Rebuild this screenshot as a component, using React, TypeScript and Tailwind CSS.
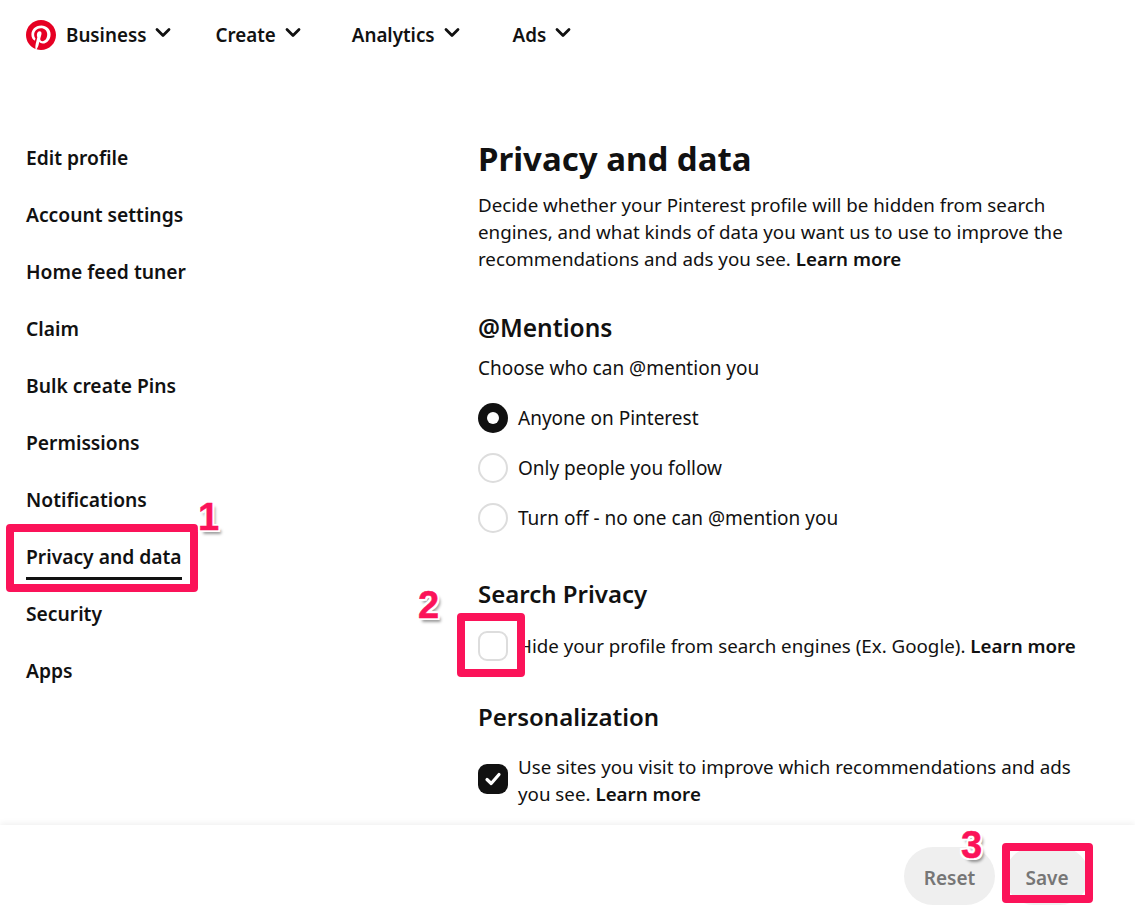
import React from "react";

const font = "font-['Noto_Sans','Open_Sans',sans-serif]";
const ink = "text-[#111111]";

function Chevron() {
  return (
    <svg width="16" height="16" viewBox="0 0 16 16" className="ml-[9px] mb-[5px]" fill="none">
      <path d="M2 4.5 L8 10.5 L14 4.5" stroke="#111" strokeWidth="2.8" strokeLinecap="round" strokeLinejoin="round" />
    </svg>
  );
}

function Logo() {
  return (
    <svg width="30" height="30" viewBox="0 0 24 24">
      <circle cx="12" cy="12" r="12" fill="#fff" />
      <path
        fill="#E60023"
        d="M12 0C5.373 0 0 5.372 0 12c0 5.084 3.163 9.426 7.627 11.174-.105-.949-.2-2.405.042-3.441.218-.937 1.407-5.965 1.407-5.965s-.359-.719-.359-1.782c0-1.668.967-2.914 2.171-2.914 1.023 0 1.518.769 1.518 1.69 0 1.029-.655 2.568-.994 3.995-.283 1.194.599 2.169 1.777 2.169 2.133 0 3.772-2.249 3.772-5.495 0-2.873-2.064-4.882-5.012-4.882-3.414 0-5.418 2.561-5.418 5.207 0 1.031.397 2.138.893 2.738a.36.36 0 0 1 .083.345l-.333 1.36c-.053.22-.174.267-.402.161-1.499-.698-2.436-2.889-2.436-4.649 0-3.785 2.75-7.262 7.929-7.262 4.163 0 7.398 2.967 7.398 6.931 0 4.136-2.607 7.464-6.227 7.464-1.216 0-2.359-.631-2.75-1.378l-.748 2.853c-.271 1.043-1.002 2.35-1.492 3.146C9.57 23.812 10.763 24 12 24c6.627 0 12-5.373 12-12S18.627 0 12 0z"
      />
    </svg>
  );
}

function NavItem({ label, className }: { label: string; className: string }) {
  return (
    <div className={`flex items-center ${className}`}>
      <span className={`text-[18.8px] font-semibold ${ink}`}>{label}</span>
      <Chevron />
    </div>
  );
}

const sidebar = [
  "Edit profile",
  "Account settings",
  "Home feed tuner",
  "Claim",
  "Bulk create Pins",
  "Permissions",
  "Notifications",
  "Privacy and data",
  "Security",
  "Apps",
];

function Radio({ on, label }: { on?: boolean; label: string }) {
  return (
    <div className="flex items-center h-[30px] mb-[20px]">
      {on ? (
        <span className="w-[30px] h-[30px] rounded-full bg-[#111] flex items-center justify-center">
          <span className="w-[12px] h-[12px] rounded-full bg-white" />
        </span>
      ) : (
        <span className="w-[30px] h-[30px] rounded-full border-2 border-[#dddddd] bg-white" />
      )}
      <span className={`ml-[10px] text-[19px] ${ink}`}>{label}</span>
    </div>
  );
}

function Annotation({ n, className }: { n: string; className: string }) {
  return (
    <span
      className={`absolute z-20 font-['Liberation_Sans',sans-serif] font-bold text-[38px] leading-none text-[#fb1359] [-webkit-text-stroke:0.5px_#fb1359] [text-shadow:2px_0_0_#fff,-2px_0_0_#fff,0_2px_0_#fff,0_-2px_0_#fff,2px_2px_0_#fff,-2px_-2px_0_#fff,2px_-2px_0_#fff,-2px_2px_0_#fff,3px_4px_3px_#00000066] ${className}`}
    >
      {n}
    </span>
  );
}

export default function App() {
  return (
    <div className={`relative h-[905px] w-[1135px] overflow-hidden bg-white flex flex-col ${font} ${ink}`}>
      <header className="h-[70px] flex items-center pl-[26px] shrink-0">
        <Logo />
        <NavItem label="Business" className="ml-[10px]" />
        <NavItem label="Create" className="ml-[44px]" />
        <NavItem label="Analytics" className="ml-[51px]" />
        <NavItem label="Ads" className="ml-[53px]" />
      </header>

      <div className="flex flex-1 min-h-0">
        <nav className="w-[478px] shrink-0 pl-[26px] pt-[70px]">
          {sidebar.map((s) => (
            <div key={s} className="h-[57px] flex items-start">
              <span
                className={`relative inline-block h-[36px] leading-[36px] text-[19.25px] font-semibold ${ink}`}
              >
                {s}
                {s === "Privacy and data" && (
                  <span className="absolute left-0 right-0 top-[38px] h-[3px] bg-[#111]" />
                )}
              </span>
            </div>
          ))}
        </nav>

        <main className="w-[600px] pt-[66px]">
          <h1 className={`text-[33px] leading-[46px] font-bold ${ink}`}>Privacy and data</h1>
          <p className={`mt-[9px] text-[18.75px] leading-[27px] ${ink}`}>
            Decide whether your Pinterest profile will be hidden from search engines, and what kinds of data you want us
            to use to improve the recommendations and ads you see. <b className="font-semibold">Learn more</b>
          </p>

          <h2 className="mt-[39px] text-[24.5px] leading-[34px] font-semibold">@Mentions</h2>
          <p className="mt-[10px] text-[19px] leading-[27px]">Choose who can @mention you</p>
          <div className="mt-[21px]">
            <Radio on label="Anyone on Pinterest" />
            <Radio label="Only people you follow" />
            <Radio label="Turn off - no one can @mention you" />
          </div>

          <h2 className="mt-[44px] text-[24px] leading-[34px] font-semibold">Search Privacy</h2>
          <div className="mt-[20px] flex items-center h-[30px]">
            <span className="w-[30px] h-[30px] rounded-[9px] border-2 border-[#dddddd] bg-white shrink-0" />
            <span className="ml-[10px] text-[18.75px] whitespace-nowrap">
              Hide your profile from search engines (Ex. Google). <b className="font-semibold">Learn more</b>
            </span>
          </div>

          <h2 className="mt-[39px] text-[24px] leading-[34px] font-semibold">Personalization</h2>
          <div className="mt-[19px] flex items-start">
            <span className="mt-[11px] w-[30px] h-[30px] rounded-[9px] bg-[#111] shrink-0 flex items-center justify-center">
              <svg width="20" height="20" viewBox="0 0 20 20" fill="none">
                <path d="M4 10.5 L8.2 14.5 L16 5.5" stroke="#fff" strokeWidth="3.2" strokeLinecap="round" strokeLinejoin="round" />
              </svg>
            </span>
            <p className="ml-[10px] text-[18.75px] leading-[27px]">
              Use sites you visit to improve which recommendations and ads you see.{" "}
              <b className="font-semibold">Learn more</b>
            </p>
          </div>
        </main>
      </div>

      <footer className="relative z-10 h-[80px] shrink-0 bg-white shadow-[0_-2px_6px_rgba(0,0,0,0.06)] flex justify-end pt-[22px] pr-[46px]">
        <div className="w-[91px] h-[58px] pt-[4px] rounded-[29px] bg-[#efefef] flex items-center justify-center text-[19px] font-semibold text-[#767676]">
          Reset
        </div>
        <div className="ml-[10px] w-[84px] h-[58px] pt-[4px] rounded-[29px] bg-[#efefef] flex items-center justify-center text-[19px] font-semibold text-[#767676]">
          Save
        </div>
      </footer>

      <div className="absolute z-20 left-[6px] top-[524px] w-[192px] h-[68px] border-[8px] border-[#fb1359] rounded-[4px]" />
      <div className="absolute z-20 left-[457px] top-[613px] w-[68px] h-[64px] border-[8px] border-[#fb1359] rounded-[4px]" />
      <div className="absolute z-20 left-[1002px] top-[843px] w-[91px] h-[60px] border-[8px] border-[#fb1359] rounded-[4px]" />
      <Annotation n="1" className="left-[198px] top-[498px]" />
      <Annotation n="2" className="left-[418px] top-[586px]" />
      <Annotation n="3" className="left-[961px] top-[826px]" />
    </div>
  );
}
